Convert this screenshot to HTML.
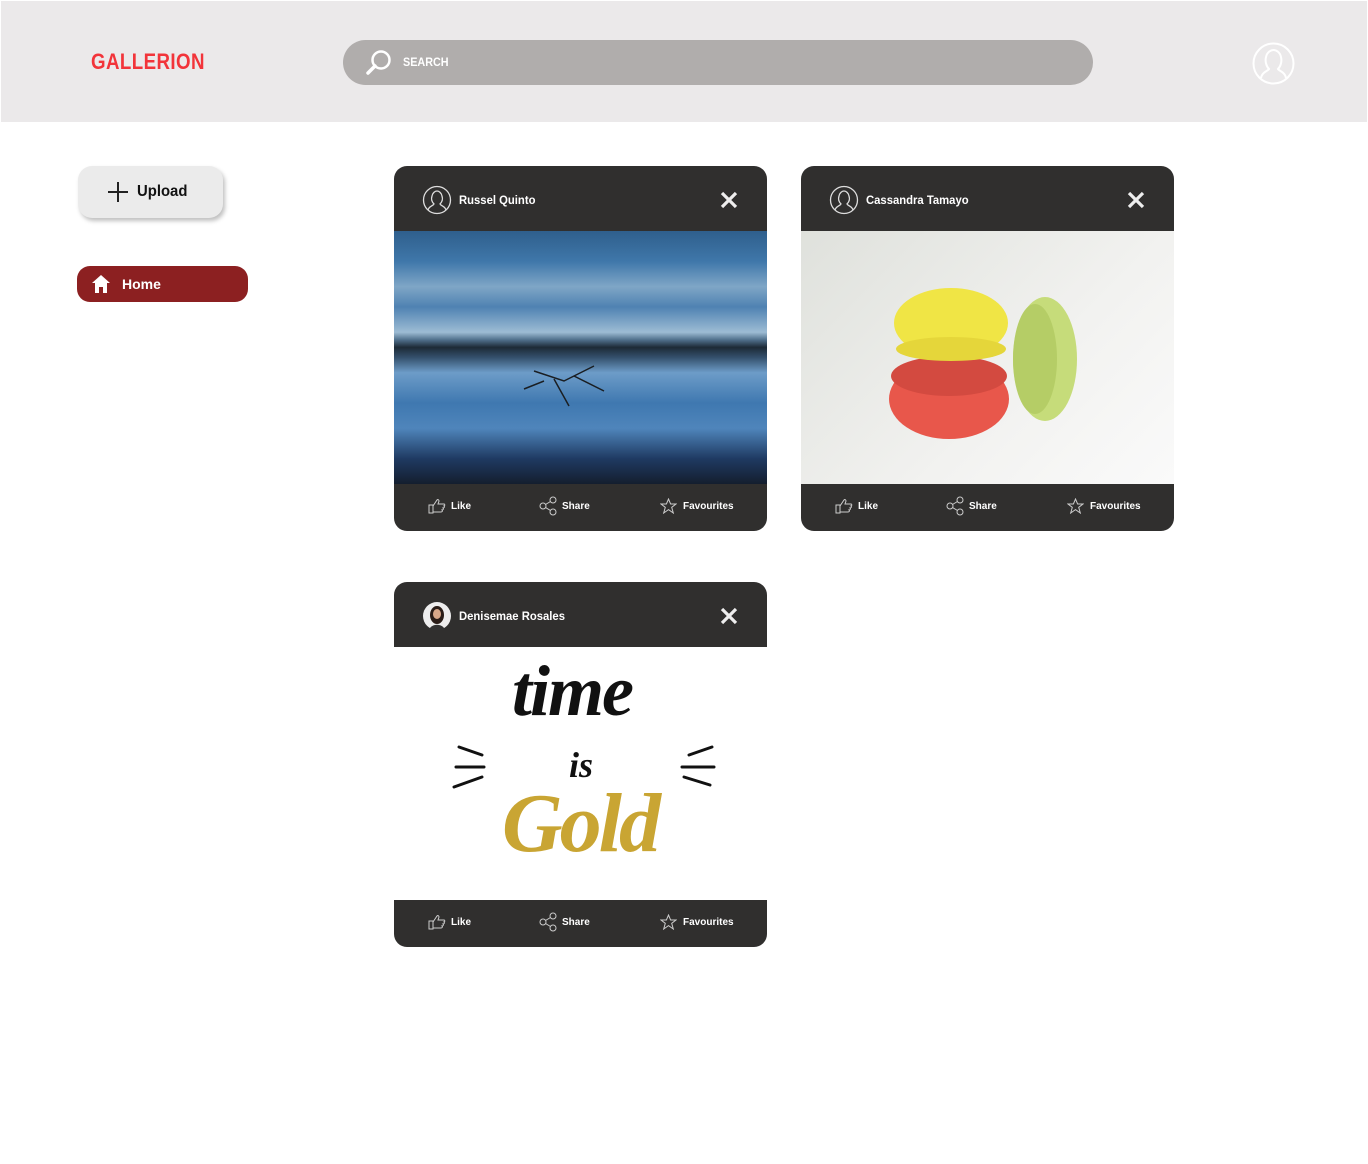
<!DOCTYPE html>
<html><head><style>
*{margin:0;padding:0;box-sizing:border-box}
body{width:1368px;height:1164px;background:#fff;font-family:"Liberation Sans",sans-serif;position:relative;overflow:hidden}
.hdr{position:absolute;left:1px;top:1px;width:1366px;height:121px;background:#ebe9ea}
.logo{position:absolute;left:91px;top:49px;color:#f2343a;font-weight:bold;font-size:22px;letter-spacing:0.5px;transform:scaleX(0.85);transform-origin:0 0}
.search{position:absolute;left:343px;top:40px;width:750px;height:45px;border-radius:23px;background:#b0adac}
.search span{position:absolute;left:60px;top:15px;color:#fff;font-weight:bold;font-size:12px;transform:scaleX(0.9);transform-origin:0 0}
.upload{position:absolute;left:78px;top:166px;width:145px;height:52px;border-radius:14px;background:#ebebeb;box-shadow:2px 3px 4px rgba(0,0,0,.25)}
.upload span{position:absolute;left:59px;top:17px;font-weight:bold;font-size:16px;color:#111;transform:scaleX(0.93);transform-origin:0 0}
.home{position:absolute;left:77px;top:266px;width:171px;height:36px;border-radius:13px;background:#8c2021}
.home span{position:absolute;left:45px;top:10px;color:#fff;font-weight:bold;font-size:14px}
.card{position:absolute;width:373px;height:365px;border-radius:13px;overflow:hidden;background:#302f2e}
.card .name{position:absolute;left:65px;top:27px;color:#fff;font-weight:bold;font-size:12px;transform:scaleX(0.94);transform-origin:0 0}
.card .img{position:absolute;left:0;top:65px;width:373px;height:253px;overflow:hidden}
.card .ft{position:absolute;top:335px;color:#fff;font-weight:bold;font-size:10px}
.av{position:absolute;left:28px;top:19px}
.x{position:absolute;left:325px;top:24px}
</style></head><body>
<div class="hdr"></div>
<div class="logo">GALLERION</div>
<div class="search">
<svg style="position:absolute;left:22px;top:9px" width="28" height="28" viewBox="0 0 28 28"><circle cx="16" cy="11" r="8.5" fill="none" stroke="#fff" stroke-width="2.5"/><path d="M10 17 L3 24" stroke="#fff" stroke-width="3.5" stroke-linecap="round"/></svg>
<span>SEARCH</span></div>
<svg style="position:absolute;left:1252px;top:42px" width="43" height="43" viewBox="0 0 43 43"><circle cx="21.5" cy="21.5" r="20" fill="none" stroke="#fff" stroke-width="2"/><path d="M9 36 C10 30 16 29 17 27 C14 24 13 19 14 15 C15 10 19 8 21.5 8 C24 8 28 10 29 15 C30 19 29 24 26 27 C27 29 33 30 34 36" fill="none" stroke="#fff" stroke-width="2"/></svg>
<div class="upload"><svg style="position:absolute;left:29px;top:15px" width="22" height="22"><path d="M11 1V21M1 11H21" stroke="#222" stroke-width="2"/></svg><span>Upload</span></div>
<div class="home"><svg style="position:absolute;left:14px;top:8px" width="20" height="19" viewBox="0 0 20 19"><path d="M10 1 L19 9 H16 V19 H12 V13 H8 V19 H4 V9 H1 Z" fill="#fff"/></svg><span>Home</span></div>

<div class="card" style="left:394px;top:166px">
<svg class="av" width="30" height="30" viewBox="0 0 30 30"><circle cx="15" cy="15" r="13.5" fill="none" stroke="#ddd" stroke-width="1.3"/><path d="M6 25 C7 21 11 21 12 19 C10 17 9 14 10 11 C10.5 8 13 6 15 6 C17 6 19.5 8 20 11 C21 14 20 17 18 19 C19 21 23 21 24 25" fill="none" stroke="#ddd" stroke-width="1.3"/></svg>
<div class="name">Russel Quinto</div>
<svg class="x" width="20" height="20"><path d="M3 3L17 17M17 3L3 17" stroke="#eee" stroke-width="3.2"/></svg>
<div class="img" style="background:linear-gradient(180deg,#2f5f8c 0%,#3f77aa 12%,#7fa6c6 22%,#4f82b2 30%,#9dbcd4 40%,#50708c 43%,#1d2a36 46%,#34506c 50%,#6d9cc8 56%,#3f78b0 68%,#4f85bb 78%,#1f3a62 90%,#141e2e 100%)">
<svg width="373" height="253"><path d="M140 140 L170 150 L200 135 M160 148 L175 175 M180 145 L210 160 M150 150 L130 158" stroke="#1a1e22" stroke-width="1.5" fill="none"/></svg></div>
<svg style="position:absolute;left:34px;top:332px" width="18" height="16" viewBox="0 0 18 16"><path d="M1 7H5V15H1Z M5 8 L9 2 C10 1 11 2 11 3 L10 6 H16 C17 6 17 8 16 8 C17 9 16 10 15 10 C16 11 15 12 14 12 C15 13 14 14 13 14 H5" fill="none" stroke="#ccc" stroke-width="1"/></svg>
<div class="ft" style="left:57px">Like</div>
<svg style="position:absolute;left:144px;top:330px" width="20" height="20" viewBox="0 0 20 20"><circle cx="5" cy="10" r="3" fill="none" stroke="#ccc"/><circle cx="15" cy="4" r="3" fill="none" stroke="#ccc"/><circle cx="15" cy="16" r="3" fill="none" stroke="#ccc"/><path d="M7.5 8.5L12.5 5.5M7.5 11.5L12.5 14.5" stroke="#ccc"/></svg>
<div class="ft" style="left:168px">Share</div>
<svg style="position:absolute;left:266px;top:332px" width="17" height="16" viewBox="0 0 17 16"><path d="M8.5 1L10.6 6H16L11.7 9.3L13.3 15L8.5 11.6L3.7 15L5.3 9.3L1 6H6.4Z" fill="none" stroke="#ccc"/></svg>
<div class="ft" style="left:289px">Favourites</div>
</div>

<div class="card" style="left:801px;top:166px">
<svg class="av" width="30" height="30" viewBox="0 0 30 30"><circle cx="15" cy="15" r="13.5" fill="none" stroke="#ddd" stroke-width="1.3"/><path d="M6 25 C7 21 11 21 12 19 C10 17 9 14 10 11 C10.5 8 13 6 15 6 C17 6 19.5 8 20 11 C21 14 20 17 18 19 C19 21 23 21 24 25" fill="none" stroke="#ddd" stroke-width="1.3"/></svg>
<div class="name">Cassandra Tamayo</div>
<svg class="x" width="20" height="20"><path d="M3 3L17 17M17 3L3 17" stroke="#eee" stroke-width="3.2"/></svg>
<div class="img" style="background:linear-gradient(135deg,#dfe1dc,#f2f2f0 60%,#fafafa)">
<svg width="373" height="253"><ellipse cx="148" cy="168" rx="60" ry="40" fill="#e8574b"/><ellipse cx="148" cy="145" rx="58" ry="20" fill="#d34a40"/><ellipse cx="244" cy="128" rx="32" ry="62" fill="#c6dc7a"/><ellipse cx="234" cy="128" rx="22" ry="55" fill="#b5cd66"/><ellipse cx="150" cy="92" rx="57" ry="35" fill="#f0e545"/><ellipse cx="150" cy="118" rx="55" ry="12" fill="#e5d63a"/></svg></div>
<svg style="position:absolute;left:34px;top:332px" width="18" height="16" viewBox="0 0 18 16"><path d="M1 7H5V15H1Z M5 8 L9 2 C10 1 11 2 11 3 L10 6 H16 C17 6 17 8 16 8 C17 9 16 10 15 10 C16 11 15 12 14 12 C15 13 14 14 13 14 H5" fill="none" stroke="#ccc" stroke-width="1"/></svg>
<div class="ft" style="left:57px">Like</div>
<svg style="position:absolute;left:144px;top:330px" width="20" height="20" viewBox="0 0 20 20"><circle cx="5" cy="10" r="3" fill="none" stroke="#ccc"/><circle cx="15" cy="4" r="3" fill="none" stroke="#ccc"/><circle cx="15" cy="16" r="3" fill="none" stroke="#ccc"/><path d="M7.5 8.5L12.5 5.5M7.5 11.5L12.5 14.5" stroke="#ccc"/></svg>
<div class="ft" style="left:168px">Share</div>
<svg style="position:absolute;left:266px;top:332px" width="17" height="16" viewBox="0 0 17 16"><path d="M8.5 1L10.6 6H16L11.7 9.3L13.3 15L8.5 11.6L3.7 15L5.3 9.3L1 6H6.4Z" fill="none" stroke="#ccc"/></svg>
<div class="ft" style="left:289px">Favourites</div>
</div>

<div class="card" style="left:394px;top:582px">
<svg class="av" width="30" height="30" viewBox="0 0 30 30"><circle cx="15" cy="15" r="14" fill="#eee"/><ellipse cx="15" cy="14" rx="7" ry="9" fill="#2a1d18"/><ellipse cx="15" cy="13" rx="4" ry="5" fill="#d9a88a"/><path d="M7 29 C9 22 21 22 23 29Z" fill="#333"/></svg>
<div class="name">Denisemae Rosales</div>
<svg class="x" width="20" height="20"><path d="M3 3L17 17M17 3L3 17" stroke="#eee" stroke-width="3.2"/></svg>
<div class="img" style="background:#fff">
<div style="position:absolute;left:118px;top:8px;font-family:'Liberation Serif',serif;font-style:italic;font-weight:bold;font-size:72px;color:#111;line-height:1;letter-spacing:-2px">time</div>
<div style="position:absolute;left:175px;top:100px;font-family:'Liberation Serif',serif;font-style:italic;font-weight:bold;font-size:36px;color:#111;line-height:1">is</div>
<div style="position:absolute;left:108px;top:135px;font-family:'Liberation Serif',serif;font-style:italic;font-weight:bold;font-size:84px;color:#c9a533;line-height:1;letter-spacing:-3px">Gold</div>
<svg width="373" height="253" style="position:absolute;left:0;top:0"><path d="M65 100L88 108M62 120L90 120M60 140L88 130M318 100L295 108M320 120L288 120M316 138L290 130" stroke="#111" stroke-width="3" stroke-linecap="round"/></svg>
</div>
<svg style="position:absolute;left:34px;top:332px" width="18" height="16" viewBox="0 0 18 16"><path d="M1 7H5V15H1Z M5 8 L9 2 C10 1 11 2 11 3 L10 6 H16 C17 6 17 8 16 8 C17 9 16 10 15 10 C16 11 15 12 14 12 C15 13 14 14 13 14 H5" fill="none" stroke="#ccc" stroke-width="1"/></svg>
<div class="ft" style="left:57px">Like</div>
<svg style="position:absolute;left:144px;top:330px" width="20" height="20" viewBox="0 0 20 20"><circle cx="5" cy="10" r="3" fill="none" stroke="#ccc"/><circle cx="15" cy="4" r="3" fill="none" stroke="#ccc"/><circle cx="15" cy="16" r="3" fill="none" stroke="#ccc"/><path d="M7.5 8.5L12.5 5.5M7.5 11.5L12.5 14.5" stroke="#ccc"/></svg>
<div class="ft" style="left:168px">Share</div>
<svg style="position:absolute;left:266px;top:332px" width="17" height="16" viewBox="0 0 17 16"><path d="M8.5 1L10.6 6H16L11.7 9.3L13.3 15L8.5 11.6L3.7 15L5.3 9.3L1 6H6.4Z" fill="none" stroke="#ccc"/></svg>
<div class="ft" style="left:289px">Favourites</div>
</div>
</body></html>
